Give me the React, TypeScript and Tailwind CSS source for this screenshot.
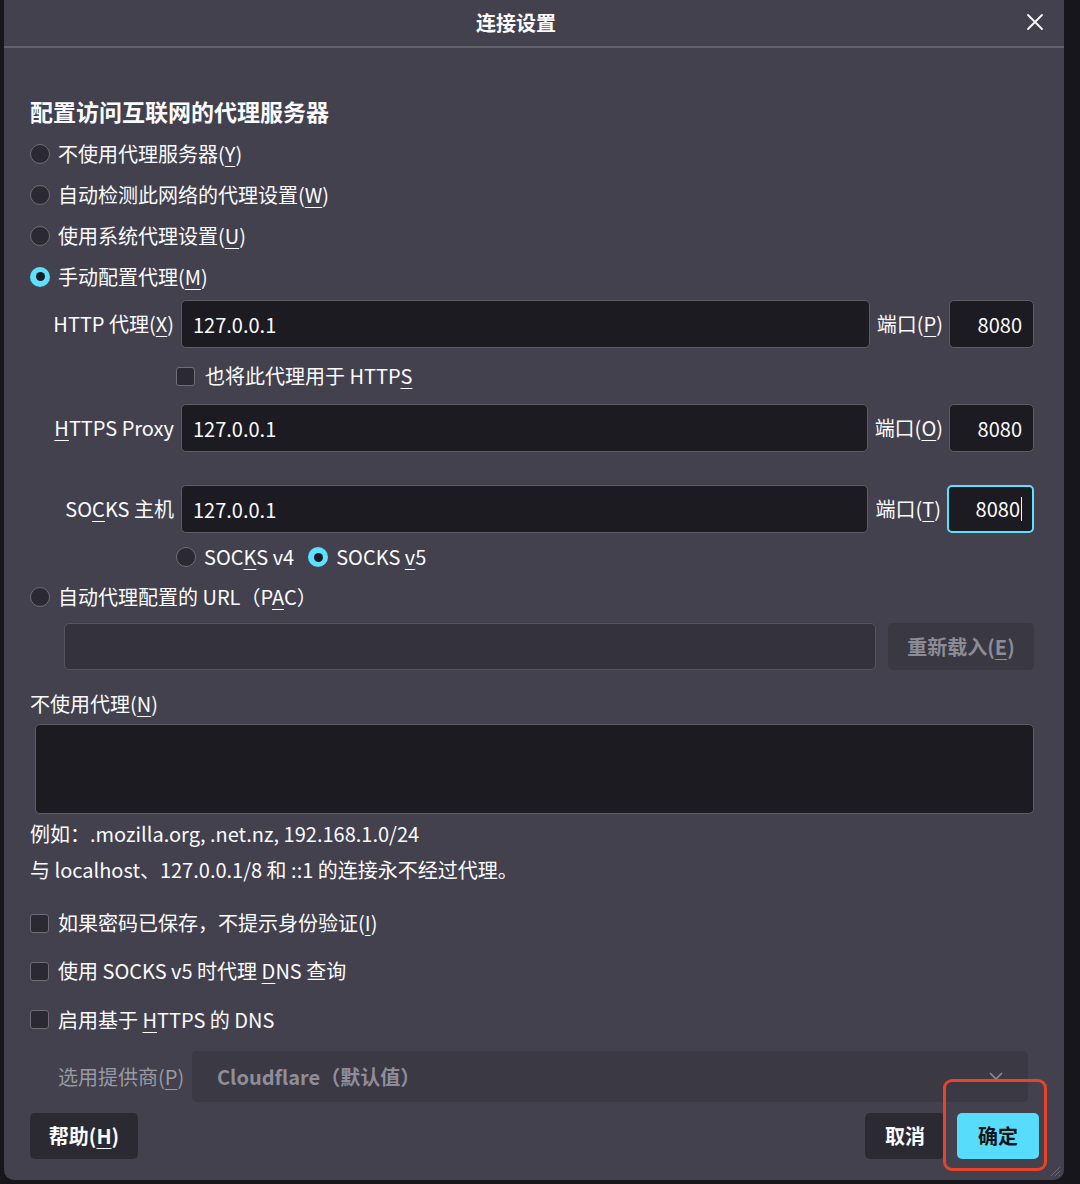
import type { ReactNode } from "react"

const font = { fontFamily: '"Noto Sans CJK SC", "Noto Sans", sans-serif' }

function Key({ children }: { children: ReactNode }) {
  return <u className="underline decoration-1 underline-offset-[4px]">{children}</u>
}

function Radio({ checked = false }: { checked?: boolean }) {
  return checked ? (
    <span className="flex h-[20px] w-[20px] shrink-0 items-center justify-center rounded-full bg-[#5ee0ff]">
      <span className="h-[9px] w-[9px] rounded-full bg-[#1c1b22]" />
    </span>
  ) : (
    <span className="h-[20px] w-[20px] shrink-0 rounded-full border border-[#6e6d78] bg-[#2b2a33]" />
  )
}

function Checkbox() {
  return <span className="h-[19px] w-[19px] shrink-0 rounded-[3px] border border-[#6e6d78] bg-[#2b2a33]" />
}

function TextInput({ value, className = "" }: { value: string; className?: string }) {
  return (
    <input
      readOnly
      value={value}
      className={`h-[48px] rounded-[5px] border border-[#5d5c67] bg-[#1c1b22] px-[11px] text-[20px] text-[#fbfbfe] outline-none ${className}`}
    />
  )
}

function ProxyRow({
  label,
  portKey,
  focused = false,
}: {
  label: ReactNode
  portKey: string
  focused?: boolean
}) {
  return (
    <div className="flex h-[48px] items-center">
      <div className="w-[145px] shrink-0 pr-[1px] text-right">{label}</div>
      <TextInput value="127.0.0.1" className="ml-[6px] min-w-0 flex-1" />
      <div className="ml-[7px] mr-[6px] shrink-0">
        端口(<Key>{portKey}</Key>)
      </div>
      {focused ? (
        <div className="flex h-[48px] w-[87px] shrink-0 items-center justify-end rounded-[5px] border-2 border-[#5ee0ff] bg-[#1c1b22] pr-[10px]">
          <span>8080</span>
          <span className="ml-[1px] h-[24px] w-[1px] bg-[#fbfbfe]" />
        </div>
      ) : (
        <TextInput value="8080" className="w-[85px] shrink-0 text-right" />
      )}
    </div>
  )
}

export default function App() {
  return (
    <div className="min-h-[1184px] w-[1080px] bg-[#17161c] text-[20px] text-[#fbfbfe]" style={font}>
      <div className="relative ml-[4px] flex h-[1180px] w-[1060px] flex-col rounded-b-[10px] bg-[#42414d]">
        {/* Header */}
        <div className="relative flex h-[48px] shrink-0 items-center justify-center border-b-2 border-[#62616c] pr-[36px]">
          <span className="font-semibold">连接设置</span>
          <svg
            className="absolute right-[20px] top-[13px]"
            width="18"
            height="18"
            viewBox="0 0 18 18"
            fill="none"
            stroke="#fbfbfe"
            strokeWidth="1.8"
            strokeLinecap="round"
          >
            <path d="M2 2L16 16M16 2L2 16" />
          </svg>
        </div>

        <div className="flex flex-1 flex-col pl-[26px] pr-[30px]">
          <h1 className="mt-[48px] flex h-[30px] items-center text-[23px] font-semibold">
            配置访问互联网的代理服务器
          </h1>

          {/* Proxy modes */}
          <div className="mt-[7px] flex flex-col">
            <label className="flex h-[41px] items-center gap-[8px]">
              <Radio />
              <span>
                不使用代理服务器(<Key>Y</Key>)
              </span>
            </label>
            <label className="flex h-[41px] items-center gap-[8px]">
              <Radio />
              <span>
                自动检测此网络的代理设置(<Key>W</Key>)
              </span>
            </label>
            <label className="flex h-[41px] items-center gap-[8px]">
              <Radio />
              <span>
                使用系统代理设置(<Key>U</Key>)
              </span>
            </label>
            <label className="flex h-[41px] items-center gap-[8px]">
              <Radio checked />
              <span>
                手动配置代理(<Key>M</Key>)
              </span>
            </label>
          </div>

          <div className="mt-[3px]">
            <ProxyRow
              label={
                <>
                  HTTP 代理(<Key>X</Key>)
                </>
              }
              portKey="P"
            />
          </div>

          <div className="flex h-[56px] items-center gap-[10px] pl-[146px]">
            <Checkbox />
            <span>
              也将此代理用于 HTTP<Key>S</Key>
            </span>
          </div>

          <ProxyRow
            label={
              <>
                <Key>H</Key>TTPS Proxy
              </>
            }
            portKey="O"
          />

          <div className="mt-[33px]">
            <ProxyRow
              label={
                <>
                  SO<Key>C</Key>KS 主机
                </>
              }
              portKey="T"
              focused
            />
          </div>

          <div className="mt-[4px] flex h-[40px] items-center pl-[146px]">
            <label className="flex items-center gap-[8px]">
              <Radio />
              <span>
                SOC<Key>K</Key>S v4
              </span>
            </label>
            <label className="ml-[14px] flex items-center gap-[8px]">
              <Radio checked />
              <span>
                SOCKS <Key>v</Key>5
              </span>
            </label>
          </div>

          <label className="flex h-[40px] items-center gap-[8px]">
            <Radio />
            <span>
              自动代理配置的 URL（P<Key>A</Key>C）
            </span>
          </label>

          <div className="mt-[6px] flex h-[47px] items-stretch gap-[12px] pl-[34px]">
            <div className="flex-1 rounded-[5px] border border-[#55545f] bg-[#34333d]" />
            <button className="w-[146px] rounded-[5px] bg-[#393843] font-semibold text-[#8d8c96]">
              重新载入(<Key>E</Key>)
            </button>
          </div>

          <div className="mt-[14px] flex h-[40px] items-center">
            不使用代理(<Key>N</Key>)
          </div>
          <div className="ml-[5px] h-[90px] rounded-[5px] border border-[#5d5c67] bg-[#1c1b22]" />

          <div className="mt-[2px] flex h-[36px] items-center">例如：.mozilla.org, .net.nz, 192.168.1.0/24</div>
          <div className="flex h-[36px] items-center">与 localhost、127.0.0.1/8 和 ::1 的连接永不经过代理。</div>

          <div className="mt-[11px] flex flex-col">
            <label className="flex h-[48px] items-center gap-[9px]">
              <Checkbox />
              <span>
                如果密码已保存，不提示身份验证(<Key>I</Key>)
              </span>
            </label>
            <label className="flex h-[48px] items-center gap-[9px]">
              <Checkbox />
              <span>
                使用 SOCKS v5 时代理 <Key>D</Key>NS 查询
              </span>
            </label>
            <label className="flex h-[49px] items-center gap-[9px]">
              <Checkbox />
              <span>
                启用基于 <Key>H</Key>TTPS 的 DNS
              </span>
            </label>
          </div>

          <div className="mt-[7px] flex h-[51px] items-center pl-[28px] pr-[6px]">
            <span className="w-[134px] shrink-0 text-[#9a99a3]">
              选用提供商(<Key>P</Key>)
            </span>
            <div className="relative flex h-full flex-1 items-center rounded-[5px] bg-[#3a3944] pl-[25px] font-semibold text-[#8f8e98]">
              Cloudflare（默认值）
              <svg
                className="absolute right-[25px] top-[21px]"
                width="14"
                height="8"
                viewBox="0 0 14 8"
                fill="none"
                stroke="#8f8e98"
                strokeWidth="1.6"
              >
                <path d="M1 1L7 7L13 1" />
              </svg>
            </div>
          </div>

          {/* Footer buttons */}
          <div className="-mr-[5px] mt-[11px] flex h-[46px] items-stretch">
            <button className="w-[108px] rounded-[5px] bg-[#2b2a33] font-bold">
              帮助(<Key>H</Key>)
            </button>
            <div className="flex-1" />
            <button className="w-[80px] rounded-[5px] bg-[#2b2a33] font-bold">取消</button>
            <div className="relative ml-[12px] flex">
              <button className="w-[82px] rounded-[5px] bg-[#58dcfb] font-bold text-[#15141a]">确定</button>
              <span className="pointer-events-none absolute -bottom-[12px] -left-[14px] -right-[8px] -top-[34px] rounded-[9px] border-[3px] border-[#e8432b]" />
            </div>
          </div>
        </div>

        {/* resize grip */}
        <svg
          className="absolute bottom-[3px] right-[3px]"
          width="12"
          height="12"
          viewBox="0 0 12 12"
          stroke="#6a6974"
          strokeWidth="1"
        >
          <path d="M11 2L2 11M11 6L6 11M11 10L10 11" />
        </svg>
      </div>
    </div>
  )
}
